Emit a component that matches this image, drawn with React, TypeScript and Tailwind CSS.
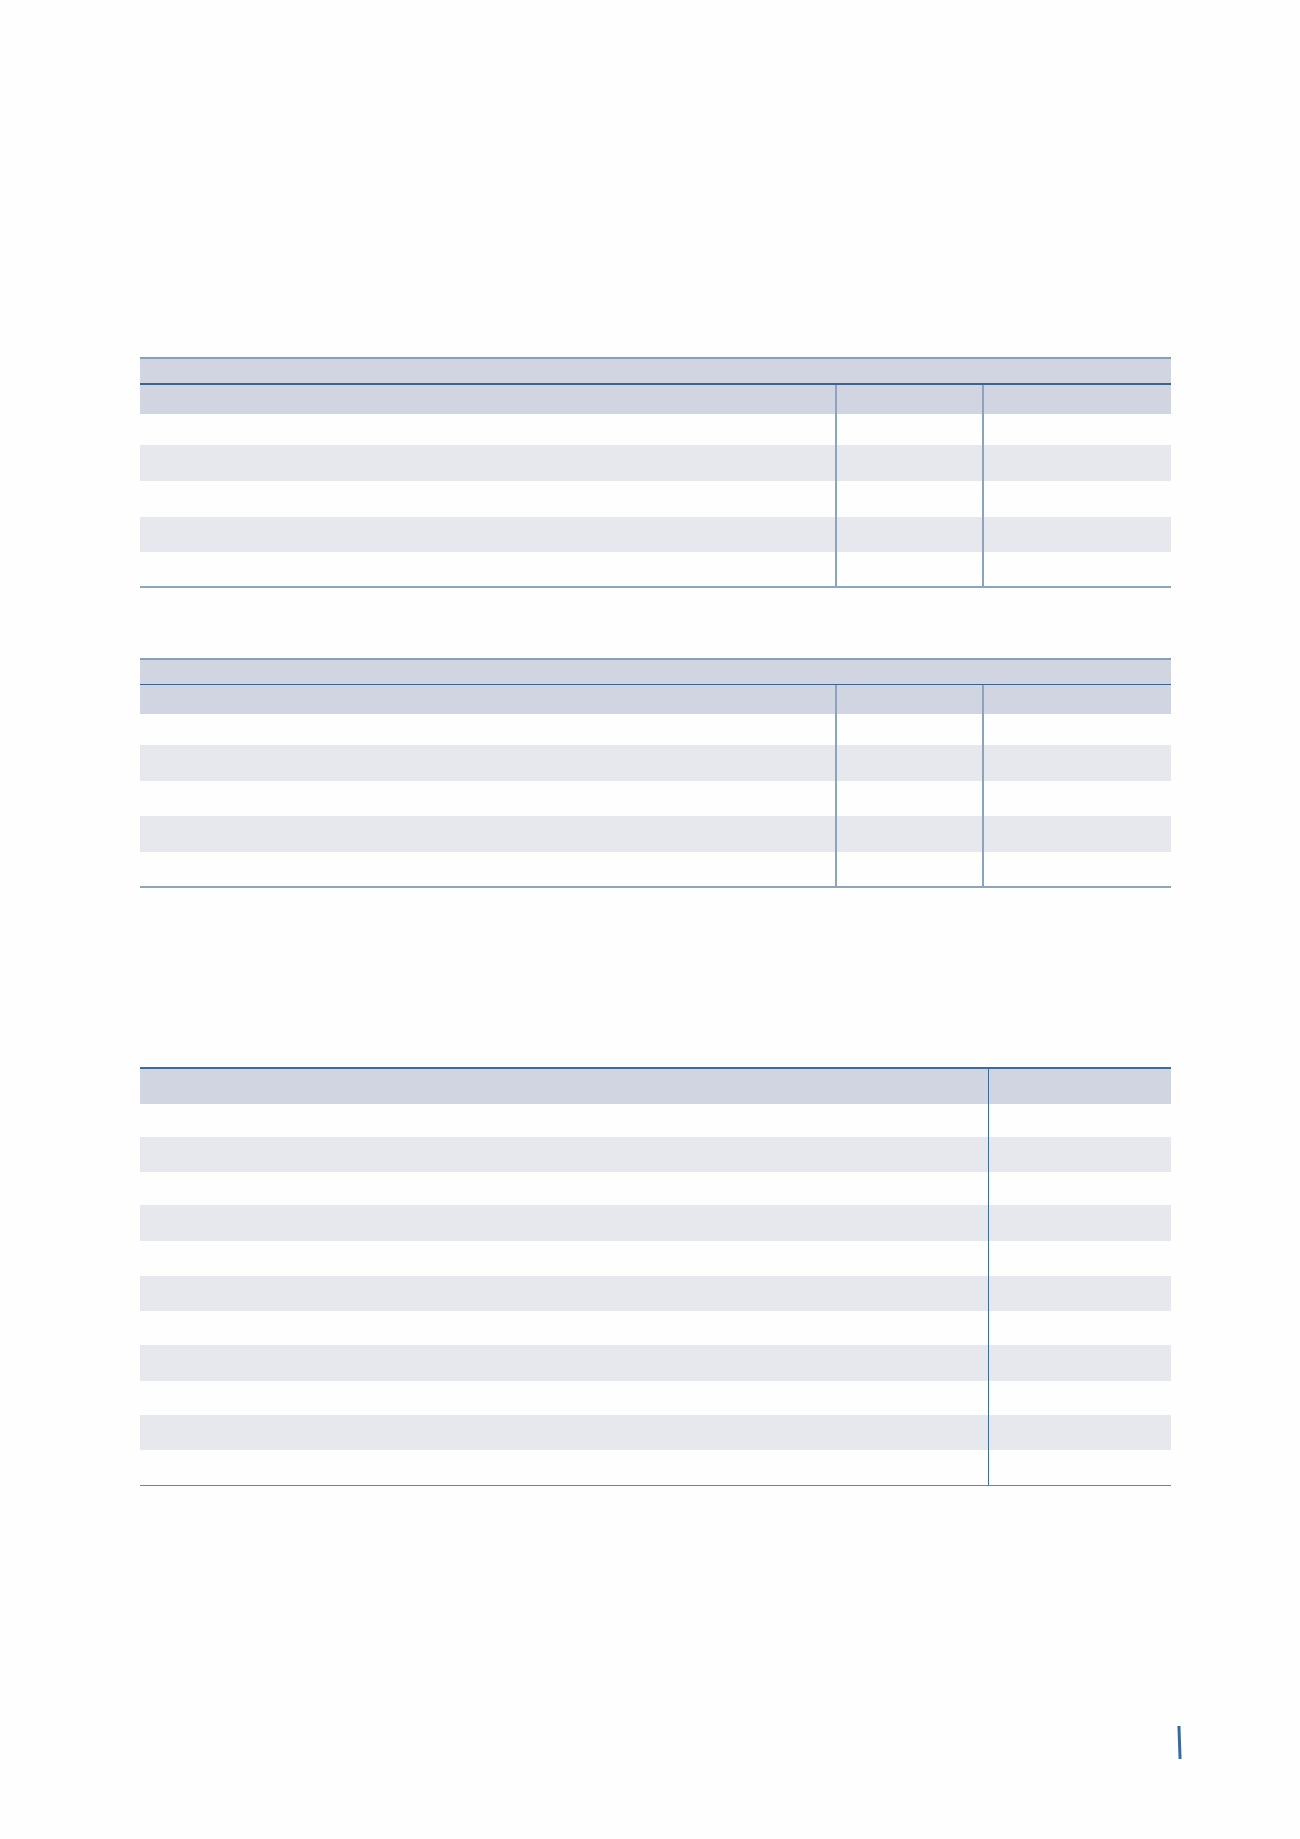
import React from "react";

const GRAY = "bg-[#e7e8ee]";
const WHITE = "bg-[#fefefe]";

function ThreeColTable({ rows }: { rows: number[] }) {
  return (
    <div className="w-[1031px]">
      <div className="h-[2px] bg-[#86a0ba]" />
      <div className="h-[24px] bg-[#d0d5e1]" />
      <div className="h-[1.5px] bg-[#3b6590]" />
      <div className="grid grid-cols-[695px_147px_189px]">
        <div className="h-[29px] bg-[#d0d5e1]" />
        <div className="h-[29px] bg-[#d0d5e1] border-l-2 border-[#8aa4be]" />
        <div className="h-[29px] bg-[#d0d5e1] border-l-2 border-[#8aa4be]" />
        {rows.map((h, i) => {
          const bg = i % 2 === 0 ? WHITE : GRAY;
          return (
            <React.Fragment key={i}>
              <div className={bg} style={{ height: h }} />
              <div className={`${bg} border-l-2 border-[#8aa4be]`} style={{ height: h }} />
              <div className={`${bg} border-l-2 border-[#8aa4be]`} style={{ height: h }} />
            </React.Fragment>
          );
        })}
      </div>
      <div className="h-[2px] bg-[#8ea6bd]" />
    </div>
  );
}

function TwoColTable({ rows }: { rows: number[] }) {
  return (
    <div className="w-[1031px]">
      <div className="h-[1.5px] bg-[#3f6d9b]" />
      <div className="grid grid-cols-[848px_183px]">
        <div className="h-[35px] bg-[#d0d5e1]" />
        <div className="h-[35px] bg-[#d0d5e1] border-l-[1.5px] border-[#3b6c9c]" />
        {rows.map((h, i) => {
          const bg = i % 2 === 0 ? WHITE : GRAY;
          return (
            <React.Fragment key={i}>
              <div className={bg} style={{ height: h }} />
              <div className={`${bg} border-l-[1.5px] border-[#3b6c9c]`} style={{ height: h }} />
            </React.Fragment>
          );
        })}
      </div>
      <div className="h-[1.5px] bg-[#5f88b0]" />
    </div>
  );
}

export default function App() {
  return (
    <div
      className="w-[1300px] h-[1839px] bg-[#fefefe] overflow-hidden"
      style={{ fontFamily: '"Liberation Sans", Arial, sans-serif' }}
    >
      <div className="pl-[140px] pt-[357px] flex flex-col">
        <ThreeColTable rows={[31, 36, 36, 35, 34]} />
        <div className="h-[70px]" />
        <ThreeColTable rows={[31, 36, 35, 36, 34]} />
        <div className="h-[179px]" />
        <TwoColTable rows={[33, 35, 33, 36, 35, 35, 34, 36, 34, 35, 35]} />
        <div className="h-[240px]" />
        <div className="flex pl-[1038px]">
          <div className="w-[2.5px] h-[33px] bg-[#3a6a9a] -rotate-[2deg]" />
        </div>
      </div>
    </div>
  );
}
